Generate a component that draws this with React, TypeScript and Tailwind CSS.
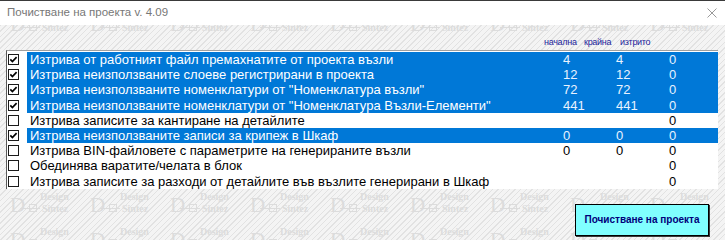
import React from 'react'

interface Row {
  label: string
  checked: boolean
  selected: boolean
  start?: string
  end?: string
  deleted: string
}

const rows: Row[] = [
  { label: 'Изтрива от работният файл премахнатите от проекта възли', checked: true, selected: true, start: '4', end: '4', deleted: '0' },
  { label: 'Изтрива неизползваните слоеве регистрирани в проекта', checked: true, selected: true, start: '12', end: '12', deleted: '0' },
  { label: 'Изтрива неизползваните номенклатури от "Номенклатура възли"', checked: true, selected: true, start: '72', end: '72', deleted: '0' },
  { label: 'Изтрива неизползваните номенклатури от "Номенклатура Възли-Елементи"', checked: true, selected: true, start: '441', end: '441', deleted: '0' },
  { label: 'Изтрива записите за кантиране на детайлите', checked: false, selected: false, deleted: '0' },
  { label: 'Изтрива неизползваните записи за крипеж в Шкаф', checked: true, selected: true, start: '0', end: '0', deleted: '0' },
  { label: 'Изтрива BIN-файловете с параметрите на генерираните възли', checked: false, selected: false, start: '0', end: '0', deleted: '0' },
  { label: 'Обединява варатите/челата в блок', checked: false, selected: false, deleted: '0' },
  { label: 'Изтрива записите за разходи от детайлите във възлите генерирани в Шкаф', checked: false, selected: false, deleted: '0' },
]

const CheckBox: React.FC<{ checked: boolean }> = ({ checked }) => (
  <svg width="11" height="11" viewBox="0 0 11 11" className="block">
    <rect x="0.5" y="0.5" width="10" height="10" fill="#fff" stroke="#1a1a1a" />
    {checked && (
      <polyline points="2.3,5.4 4.4,7.5 8.6,3.2" fill="none" stroke="#000" strokeWidth="1.7" />
    )}
  </svg>
)

// faint "D Design Sintez" watermark tile
const WatermarkTile: React.FC = () => (
  <div className="relative h-[35.2px] w-[80px] shrink-0 text-[#dcdcdc]">
    <span className="absolute left-[6px] top-[6px] font-['Liberation_Serif',serif] text-[21px] leading-none">
      D
    </span>
    <span className="absolute left-[36px] top-[3px] font-['Liberation_Serif',serif] text-[10px] font-bold leading-none">
      Design
    </span>
    <span className="absolute left-[16px] top-[19px] h-px w-[20px] bg-[#dcdcdc]" />
    <span className="absolute left-[25px] top-[15px] h-[8px] w-[8px] border border-[#dcdcdc]" />
    <span className="absolute left-[38px] top-[15px] font-['Liberation_Serif',serif] text-[10px] font-bold leading-none">
      Sintez
    </span>
  </div>
)

const Watermark: React.FC<{ offset: string; count: number }> = ({ offset, count }) => (
  <div className={`absolute left-[4px] flex w-[800px] flex-wrap ${offset}`}>
    {Array.from({ length: count }).map((_, i) => (
      <WatermarkTile key={i} />
    ))}
  </div>
)

const App: React.FC = () => {
  return (
    <div className="h-[240px] w-[725px] overflow-hidden bg-white font-['Liberation_Sans',Arial,sans-serif]">
      <header className="flex h-[25px] items-center justify-between border-t border-[#3a3a3a] pl-[7px] pr-[8px]">
        <span className="text-[11.5px] text-[#777]">Почистване на проекта v. 4.09</span>
        <svg width="10" height="10" viewBox="0 0 10 10">
          <path d="M0.5 0.5 L9.5 9.5 M9.5 0.5 L0.5 9.5" stroke="#9a9a9a" strokeWidth="1" />
        </svg>
      </header>

      <div className="h-[215px] bg-[repeating-linear-gradient(135deg,#e2e2e2_0px,#e2e2e2_1px,#f4f4f4_1px,#f4f4f4_4px)]">
        <div className="relative h-[25px] overflow-hidden">
          <Watermark offset="top-[-17px]" count={10} />
          <div className="relative flex h-full items-end pb-[3px] pl-[544px] text-[9px] leading-none tracking-[-0.3px] text-[#1d1d9b]">
            <span className="w-[40px]">начална</span>
            <span className="w-[36px]">крайна</span>
            <span>изтрито</span>
          </div>
        </div>

        <div className="ml-[6px] w-[712px] border-l border-t border-l-[#5a5a5a] border-t-[#a0a0a0] bg-white pt-px">
          {rows.map((row) => (
            <div key={row.label} className="flex h-[15.2px] items-center text-[13px] leading-none">
              <div className="flex w-[20px] items-center pl-[1px]">
                <CheckBox checked={row.checked} />
              </div>
              <div
                className={`flex h-full flex-1 items-center ${
                  row.selected ? 'bg-[#0078d7] text-white' : 'bg-white text-black'
                }`}
              >
                <span className="w-[536px] whitespace-nowrap pl-[3px]">{row.label}</span>
                <span className={`w-[53px] ${row.selected ? 'text-[#e8f2ff]' : ''}`}>{row.start}</span>
                <span className={`w-[53px] ${row.selected ? 'text-[#e8f2ff]' : ''}`}>{row.end}</span>
                <span className={row.selected ? 'text-[#e8f2ff]' : ''}>{row.deleted}</span>
              </div>
            </div>
          ))}
        </div>

        <div className="relative h-[52px] overflow-hidden">
          <Watermark offset="top-0" count={20} />
          <div className="relative flex justify-end pr-[16px] pt-[15px]">
            <button className="flex h-[32px] w-[134px] items-center justify-center border border-black bg-[#80ffff] text-[10px] font-bold text-[#00007a] shadow-[1px_1px_0_0_#3a3a3a]">
              Почистване на проекта
            </button>
          </div>
        </div>
      </div>
    </div>
  )
}

export default App
